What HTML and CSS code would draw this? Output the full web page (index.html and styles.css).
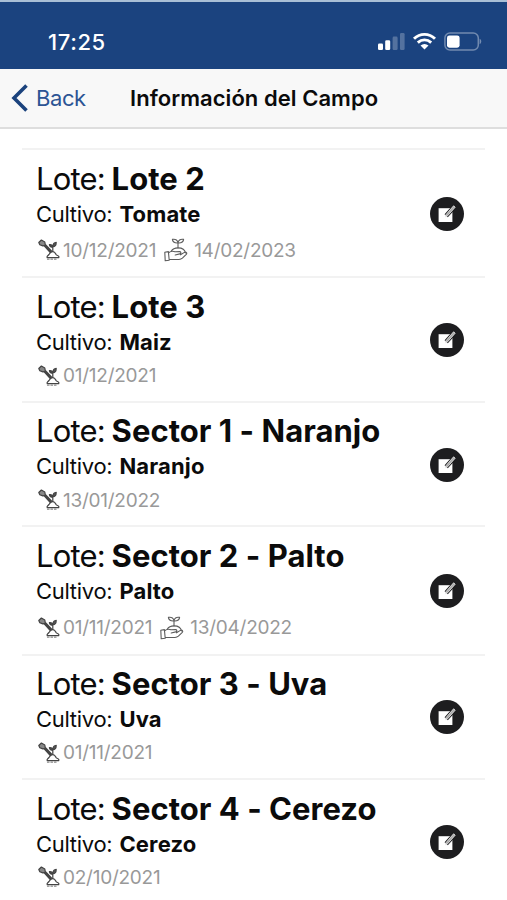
FILE: index.html
```html
<!DOCTYPE html>
<html lang="es">
<head>
<meta charset="utf-8">
<title>Información del Campo</title>
<link rel="stylesheet" href="styles.css">
</head>
<body>
<svg class="defs" width="0" height="0" aria-hidden="true">
  <symbol id="plant" viewBox="0 0 22 22">
    <g fill="none" stroke="#444" stroke-width="1.2" stroke-linecap="round" stroke-linejoin="round">
      <path d="M.8 3.5 3.4 1 6.8 3 7.4 6.4 4.8 6.9 1.8 5.8Z" fill="#888"/>
      <path d="M6.2 6.8 12.3 13.6M7.8 5.8 13.7 12.2M7 6.3 13 13" />
      <path d="M14.8 12.5V8.2M14.8 8.2C11.8 8.2 11.5 6.5 11.4 5.6 13.5 5.4 14.6 6.4 14.8 8.2ZM14.8 7.8C15 4.5 16.6 3.5 18.2 3.4 18.2 6 17 7.6 14.8 7.8Z" fill="#555"/>
      <path d="M9.2 18.7C8.4 17 10.2 16.8 11 15.4 12 13.4 13.2 12.6 14.8 12.6 16.7 12.6 17.4 14.2 18.3 15.8 20 16.6 21.5 17.2 20.7 18.7Z"/>
      <path d="M9.5 20.2H20" stroke-dasharray="1.5 2" stroke="#888"/>
    </g>
  </symbol>
  <symbol id="harvest" viewBox="0 0 24 24">
    <g fill="none" stroke="#5c5c5c" stroke-width="1.1" stroke-linecap="round" stroke-linejoin="round">
      <path d="M14 10V4.8M14 5C10.5 5.2 8.6 3.8 8.4 1.4 11.8.8 13.8 2.4 14 5ZM14 5C14.2 2.4 16.2.8 19.6 1.4 19.4 3.8 17.5 5.2 14 5Z"/>
      <path d="M7.2 13.2C8.5 11 11 9.9 14 9.9 18 9.9 21 12 21.4 15"/>
      <path d="M.8 14.2 4.4 13.6 5.2 22.2 1.2 22.8ZM4.6 14.8C7 13 9 13 11 13.8L15.8 13.6C17.2 13.7 17.2 15.6 15.8 15.9L11.2 17M16.5 16.8 20.4 14.4C22.2 13.6 23.4 14.9 22.3 16.3L18.4 20.2C17.5 21 16.4 21.5 15 21.5H5.2"/>
    </g>
  </symbol>
  <symbol id="edit" viewBox="0 0 34 34">
    <circle cx="17" cy="17" r="17" fill="#1d1d1f"/>
    <path d="M8.6 11.2H22.4V25H8.6Z" fill="#fff"/>
    <path d="M16.2 18.8 25.2 8.8" stroke="#1d1d1f" stroke-width="4.4"/>
    <path d="M15.4 19.8 16.2 17.4 23.6 8.8 25.2 10.2 17.6 18.8Z" fill="#aaa" stroke="#eee" stroke-width=".8"/>
  </symbol>
</svg>

<header class="status">
  <span class="clock">17:25</span>
  <svg class="indicators" width="106" height="20" viewBox="0 0 106 20">
    <g fill="#fff">
      <rect x="1" y="11.5" width="5" height="6.5" rx="1.3"/>
      <rect x="8.2" y="8.3" width="5" height="9.7" rx="1.3"/>
      <g opacity=".25"><rect x="15.6" y="4.6" width="5" height="13.4" rx="1.3"/><rect x="23" y="1" width="4.6" height="17" rx="1.3"/></g>
    </g>
    <g fill="none" stroke="#fff" stroke-width="2.9">
      <path d="M37 6.8C43 .9 52 .9 58 6.8"/>
      <path d="M40.8 10.6C44.7 7 50.3 7 54.2 10.6"/>
    </g>
    <path d="M43.5 13.5C46 11.5 49 11.5 51.5 13.5L47.5 17.6Z" fill="#fff"/>
    <rect x="67.9" y="1" width="33.4" height="17" rx="5" fill="none" stroke="#fff" stroke-opacity=".38" stroke-width="1.5"/>
    <rect x="70" y="3.4" width="12.6" height="12.3" rx="2.4" fill="#fff"/>
    <path d="M102.6 6.8C104.8 7.5 104.8 11.5 102.6 12.2Z" fill="#fff" opacity=".4"/>
  </svg>
</header>

<nav class="bar">
  <a class="back"><svg width="18" height="28" viewBox="0 0 18 28"><path d="M15.5 1.5 3 14 15.5 26.5" fill="none" stroke="#1b437d" stroke-width="3.6"/></svg><span>Back</span></a>
  <h1 class="heading">Información del Campo</h1>
</nav>

<main class="list">
  <article class="row"><div class="info">
    <h2 class="lot"><span>Lote:</span> <b>Lote 2</b></h2>
    <p class="crop"><span>Cultivo:</span> <b>Tomate</b></p>
    <p class="dates tall"><svg class="plant"><use href="#plant"/></svg><span>10/12/2021</span><svg class="harvest"><use href="#harvest"/></svg><span>14/02/2023</span></p>
  </div><svg class="edit"><use href="#edit"/></svg></article>
  <article class="row"><div class="info">
    <h2 class="lot"><span>Lote:</span> <b>Lote 3</b></h2>
    <p class="crop"><span>Cultivo:</span> <b>Maiz</b></p>
    <p class="dates"><svg class="plant"><use href="#plant"/></svg><span>01/12/2021</span></p>
  </div><svg class="edit"><use href="#edit"/></svg></article>
  <article class="row"><div class="info">
    <h2 class="lot"><span>Lote:</span> <b>Sector 1 - Naranjo</b></h2>
    <p class="crop"><span>Cultivo:</span> <b>Naranjo</b></p>
    <p class="dates"><svg class="plant"><use href="#plant"/></svg><span>13/01/2022</span></p>
  </div><svg class="edit"><use href="#edit"/></svg></article>
  <article class="row"><div class="info">
    <h2 class="lot"><span>Lote:</span> <b>Sector 2 - Palto</b></h2>
    <p class="crop"><span>Cultivo:</span> <b>Palto</b></p>
    <p class="dates tall"><svg class="plant"><use href="#plant"/></svg><span>01/11/2021</span><svg class="harvest"><use href="#harvest"/></svg><span>13/04/2022</span></p>
  </div><svg class="edit"><use href="#edit"/></svg></article>
  <article class="row"><div class="info">
    <h2 class="lot"><span>Lote:</span> <b>Sector 3 - Uva</b></h2>
    <p class="crop"><span>Cultivo:</span> <b>Uva</b></p>
    <p class="dates"><svg class="plant"><use href="#plant"/></svg><span>01/11/2021</span></p>
  </div><svg class="edit"><use href="#edit"/></svg></article>
  <article class="row"><div class="info">
    <h2 class="lot"><span>Lote:</span> <b>Sector 4 - Cerezo</b></h2>
    <p class="crop"><span>Cultivo:</span> <b>Cerezo</b></p>
    <p class="dates"><svg class="plant"><use href="#plant"/></svg><span>02/10/2021</span></p>
  </div><svg class="edit"><use href="#edit"/></svg></article>
</main>
</body>
</html>
```
FILE: styles.css
```css
* { box-sizing: border-box; }
body { margin: 0; height: 900px; overflow: hidden; background: #fff; color: #0b0b0b; font-family: Inter, "Liberation Sans", sans-serif; }
.defs { display: block; height: 0; }
.status { height: 69px; padding: 12px 24px 0 48px; display: flex; align-items: center; justify-content: space-between; background: #1b437f; border-top: 2px solid #a9bfd6; color: #fff; }
.clock { font-size: 22px; font-weight: 500; line-height: 26px; letter-spacing: 0.6px; }
.bar { height: 60px; display: grid; grid-template-columns: 130px 1fr; align-items: center; background: #f8f8f8; border-bottom: 2px solid #dedede; }
.back { display: flex; align-items: center; gap: 7px; padding-left: 11px; color: #2c5494; font-size: 22px; letter-spacing: -0.4px; }
.heading { margin: 0; font-size: 22px; font-weight: 600; letter-spacing: 0.05px; white-space: nowrap; }
.list { margin: 19px 22px 0; }
.row { display: flex; align-items: center; justify-content: space-between; border-top: 2px solid #f2f2f2; padding: 9.6px 21px 8.2px 14px; }
.info { white-space: nowrap; }
.lot { margin: 0; display: flex; font-size: 31px; font-weight: 400; line-height: 38px; letter-spacing: -0.8px; }
.lot span { width: 75.6px; }
.lot b { font-weight: 700; letter-spacing: 0.03px; }
.crop { margin: 0; display: flex; font-size: 22px; line-height: 33px; letter-spacing: -0.3px; }
.crop span { width: 83.4px; }
.crop b { font-weight: 700; letter-spacing: 0.15px; }
.dates { margin: 0; height: 33.7px; display: flex; align-items: center; color: #999; font-size: 19px; letter-spacing: -0.25px; }
.dates.tall { height: 37.5px; padding-top: 2px; }
.plant { width: 22px; height: 22px; margin: 0 3px 0 2px; }
.harvest { width: 24px; height: 24px; margin: 0 6.5px 0 7.5px; }
.edit { width: 34px; height: 34px; }
```
